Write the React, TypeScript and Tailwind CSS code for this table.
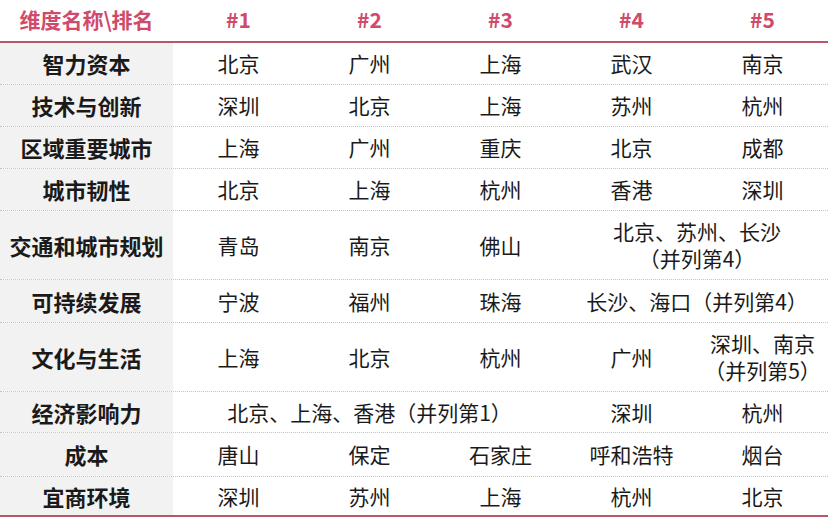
const FONT = { fontFamily: '"Noto Sans CJK SC", "Noto Sans", sans-serif' };

type Cell = { text: string[]; span?: number };
type Row = { label: string; h: string; cells: Cell[] };

const c = (...text: string[]): Cell => ({ text });

const ROWS: Row[] = [
  { label: "智力资本", h: "h-[42px]", cells: [c("北京"), c("广州"), c("上海"), c("武汉"), c("南京")] },
  { label: "技术与创新", h: "h-[42px]", cells: [c("深圳"), c("北京"), c("上海"), c("苏州"), c("杭州")] },
  { label: "区域重要城市", h: "h-[42px]", cells: [c("上海"), c("广州"), c("重庆"), c("北京"), c("成都")] },
  { label: "城市韧性", h: "h-[42px]", cells: [c("北京"), c("上海"), c("杭州"), c("香港"), c("深圳")] },
  {
    label: "交通和城市规划",
    h: "h-[69px]",
    cells: [c("青岛"), c("南京"), c("佛山"), { text: ["北京、苏州、长沙", "（并列第4）"], span: 2 }],
  },
  {
    label: "可持续发展",
    h: "h-[43px]",
    cells: [c("宁波"), c("福州"), c("珠海"), { text: ["长沙、海口（并列第4）"], span: 2 }],
  },
  {
    label: "文化与生活",
    h: "h-[69px]",
    cells: [c("上海"), c("北京"), c("杭州"), c("广州"), c("深圳、南京", "（并列第5）")],
  },
  {
    label: "经济影响力",
    h: "h-[41px]",
    cells: [{ text: ["北京、上海、香港（并列第1）"], span: 3 }, c("深圳"), c("杭州")],
  },
  { label: "成本", h: "h-[44px]", cells: [c("唐山"), c("保定"), c("石家庄"), c("呼和浩特"), c("烟台")] },
  { label: "宜商环境", h: "h-[40px]", cells: [c("深圳"), c("苏州"), c("上海"), c("杭州"), c("北京")] },
];

const GRID = "grid grid-cols-[173px_repeat(5,1fr)]";

export default function App() {
  return (
    <div className="h-[524px] w-[828px] bg-white text-[#1a1a1a]" style={FONT}>
      {/* header */}
      <div className={`${GRID} h-[43px] items-center border-b-2 border-[#b8566b] text-[21px] font-bold text-[#cf4a6b]`}>
        <div className="pb-[2px] text-center">维度名称\排名</div>
        {["#1", "#2", "#3", "#4", "#5"].map((n) => (
          <div key={n} className="pb-[2px] text-center">
            {n}
          </div>
        ))}
      </div>

      {ROWS.map((row, i) => {
        const last = i === ROWS.length - 1;
        return (
          <div
            key={row.label}
            className={`${GRID} ${row.h} ${
              last ? "border-b-2 border-[#b8566b]" : "border-b border-dotted border-[#c4c4c4]"
            }`}
          >
            <div className="flex items-center justify-center bg-[#f2f2f2] text-[22px] font-bold">{row.label}</div>
            {row.cells.map((cell, j) => (
              <div
                key={j}
                className={`flex flex-col items-center justify-center text-center text-[21px] leading-[27px] ${
                  cell.span === 3 ? "col-span-3" : cell.span === 2 ? "col-span-2" : ""
                }`}
              >
                {cell.text.map((t) => (
                  <span key={t}>{t}</span>
                ))}
              </div>
            ))}
          </div>
        );
      })}
    </div>
  );
}
